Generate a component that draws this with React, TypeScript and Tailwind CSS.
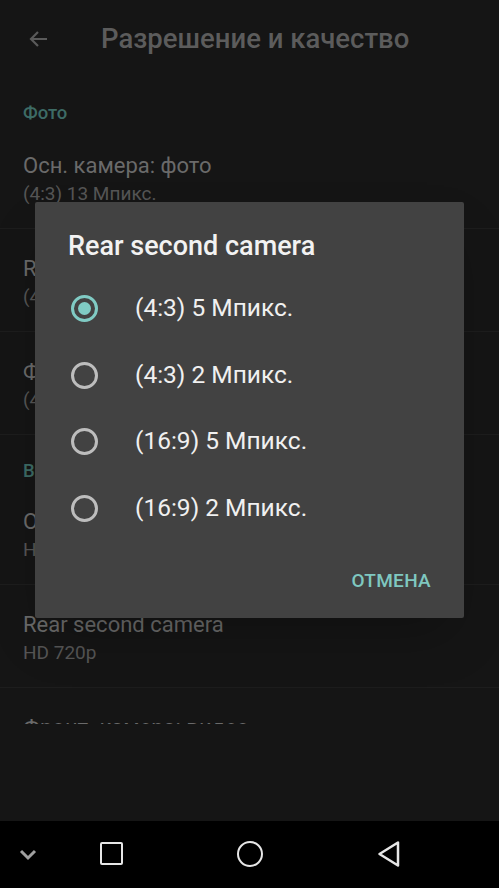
import { useState } from "react"

interface Pref {
  title: string
  value: string
}

const PHOTO: Pref[] = [
  { title: "Осн. камера: фото", value: "(4:3) 13 Мпикс." },
  { title: "Rear second camera", value: "(4:3) 5 Мпикс." },
  { title: "Фронт. камера: фото", value: "(4:3) 5 Мпикс." },
]

const VIDEO: Pref[] = [
  { title: "Осн. камера: видео", value: "HD 1080p" },
  { title: "Rear second camera", value: "HD 720p" },
  { title: "Фронт. камера: видео", value: "HD 720p" },
]

const OPTIONS = [
  "(4:3) 5 Мпикс.",
  "(4:3) 2 Мпикс.",
  "(16:9) 5 Мпикс.",
  "(16:9) 2 Мпикс.",
]

function PrefRow({ p }: { p: Pref }) {
  return (
    <div className="px-[23px] pt-[28px] pb-[22px] border-b border-[#1d1d1d]">
      <div className="text-[22px] leading-[24px] text-[#6a6a6a]">{p.title}</div>
      <div className="mt-[4px] text-[19px] leading-[24px] text-[#555555]">{p.value}</div>
    </div>
  )
}

function Radio({ on }: { on: boolean }) {
  return (
    <span
      className={
        on
          ? "w-[27px] h-[27px] rounded-full border-[3px] border-[#80cbc4] flex items-center justify-center"
          : "w-[27px] h-[27px] rounded-full border-[3px] border-[#bdbdbd] flex items-center justify-center"
      }
    >
      {on && <span className="w-[13px] h-[13px] rounded-full bg-[#80cbc4]" />}
    </span>
  )
}

export default function App() {
  const [sel, setSel] = useState(0)

  return (
    <div
      className="relative h-[888px] w-full flex flex-col bg-[#151515] overflow-hidden"
      style={{ fontFamily: "Roboto, 'Noto Sans', sans-serif" }}
    >
      <div className="relative flex-1">
        {/* Settings list (dimmed behind dialog) */}
        <div className="h-[724px] overflow-hidden">
          <header className="h-[78px] flex items-center">
            <svg width="24" height="24" viewBox="0 0 24 24" className="ml-[27px]">
              <path
                d="M20 12H4.5M11 5l-7 7 7 7"
                fill="none"
                stroke="#5a5a5a"
                strokeWidth="2.2"
              />
            </svg>
            <h1 className="ml-[50px] text-[27.5px] font-medium text-[#5c5c5c]">
              Разрешение и качество
            </h1>
          </header>

          <div className="h-[48px] px-[23px] pt-[23px] text-[18.5px] leading-[24px] font-medium text-[#3d6b65]">
            Фото
          </div>
          {PHOTO.map((p, i) => (
            <PrefRow key={i} p={p} />
          ))}

          <div className="h-[47px] px-[23px] pt-[24px] text-[18.5px] leading-[24px] font-medium text-[#3d6b65]">
            Видео
          </div>
          {VIDEO.map((p, i) => (
            <PrefRow key={i} p={p} />
          ))}
        </div>

        {/* Dialog */}
        <div className="absolute left-[35px] top-[202px] w-[429px] h-[416px] bg-[#424242] rounded-[2px] shadow-2xl">
          <h2 className="pl-[33px] pt-[28px] text-[27px] leading-[32px] font-medium text-[#f2f2f2]">
            Rear second camera
          </h2>
          <ul className="mt-[13px]">
            {OPTIONS.map((o, i) => (
              <li
                key={i}
                className="h-[66.7px] flex items-center cursor-pointer"
                onClick={() => setSel(i)}
              >
                <span className="ml-[36px]">
                  <Radio on={sel === i} />
                </span>
                <span className="ml-[37px] text-[24.5px] text-[#f0f0f0]">{o}</span>
              </li>
            ))}
          </ul>
          <div className="mt-[25px] flex justify-end pr-[33px]">
            <button className="text-[19px] font-medium tracking-[0.3px] text-[#7fc8c0]">
              ОТМЕНА
            </button>
          </div>
        </div>
      </div>

      {/* Navigation bar */}
      <nav className="h-[67px] bg-black flex items-center relative">
        <svg width="20" height="12" viewBox="0 0 20 12" className="absolute left-[18px] top-[28px]">
          <path d="M3 2l7 7 7-7" fill="none" stroke="#a0a0a0" strokeWidth="3" />
        </svg>
        <span className="absolute left-[100px] top-[21px] w-[23px] h-[23px] border-[2.5px] border-[#e6e6e6] rounded-[2px]" />
        <span className="absolute left-[237px] top-[20px] w-[26px] h-[26px] border-[2.5px] border-[#e6e6e6] rounded-full" />
        <svg width="24" height="28" viewBox="0 0 24 28" className="absolute left-[377px] top-[19px]">
          <path d="M21 2.5v23L2.5 14z" fill="none" stroke="#e6e6e6" strokeWidth="2.5" strokeLinejoin="round" />
        </svg>
      </nav>
    </div>
  )
}
